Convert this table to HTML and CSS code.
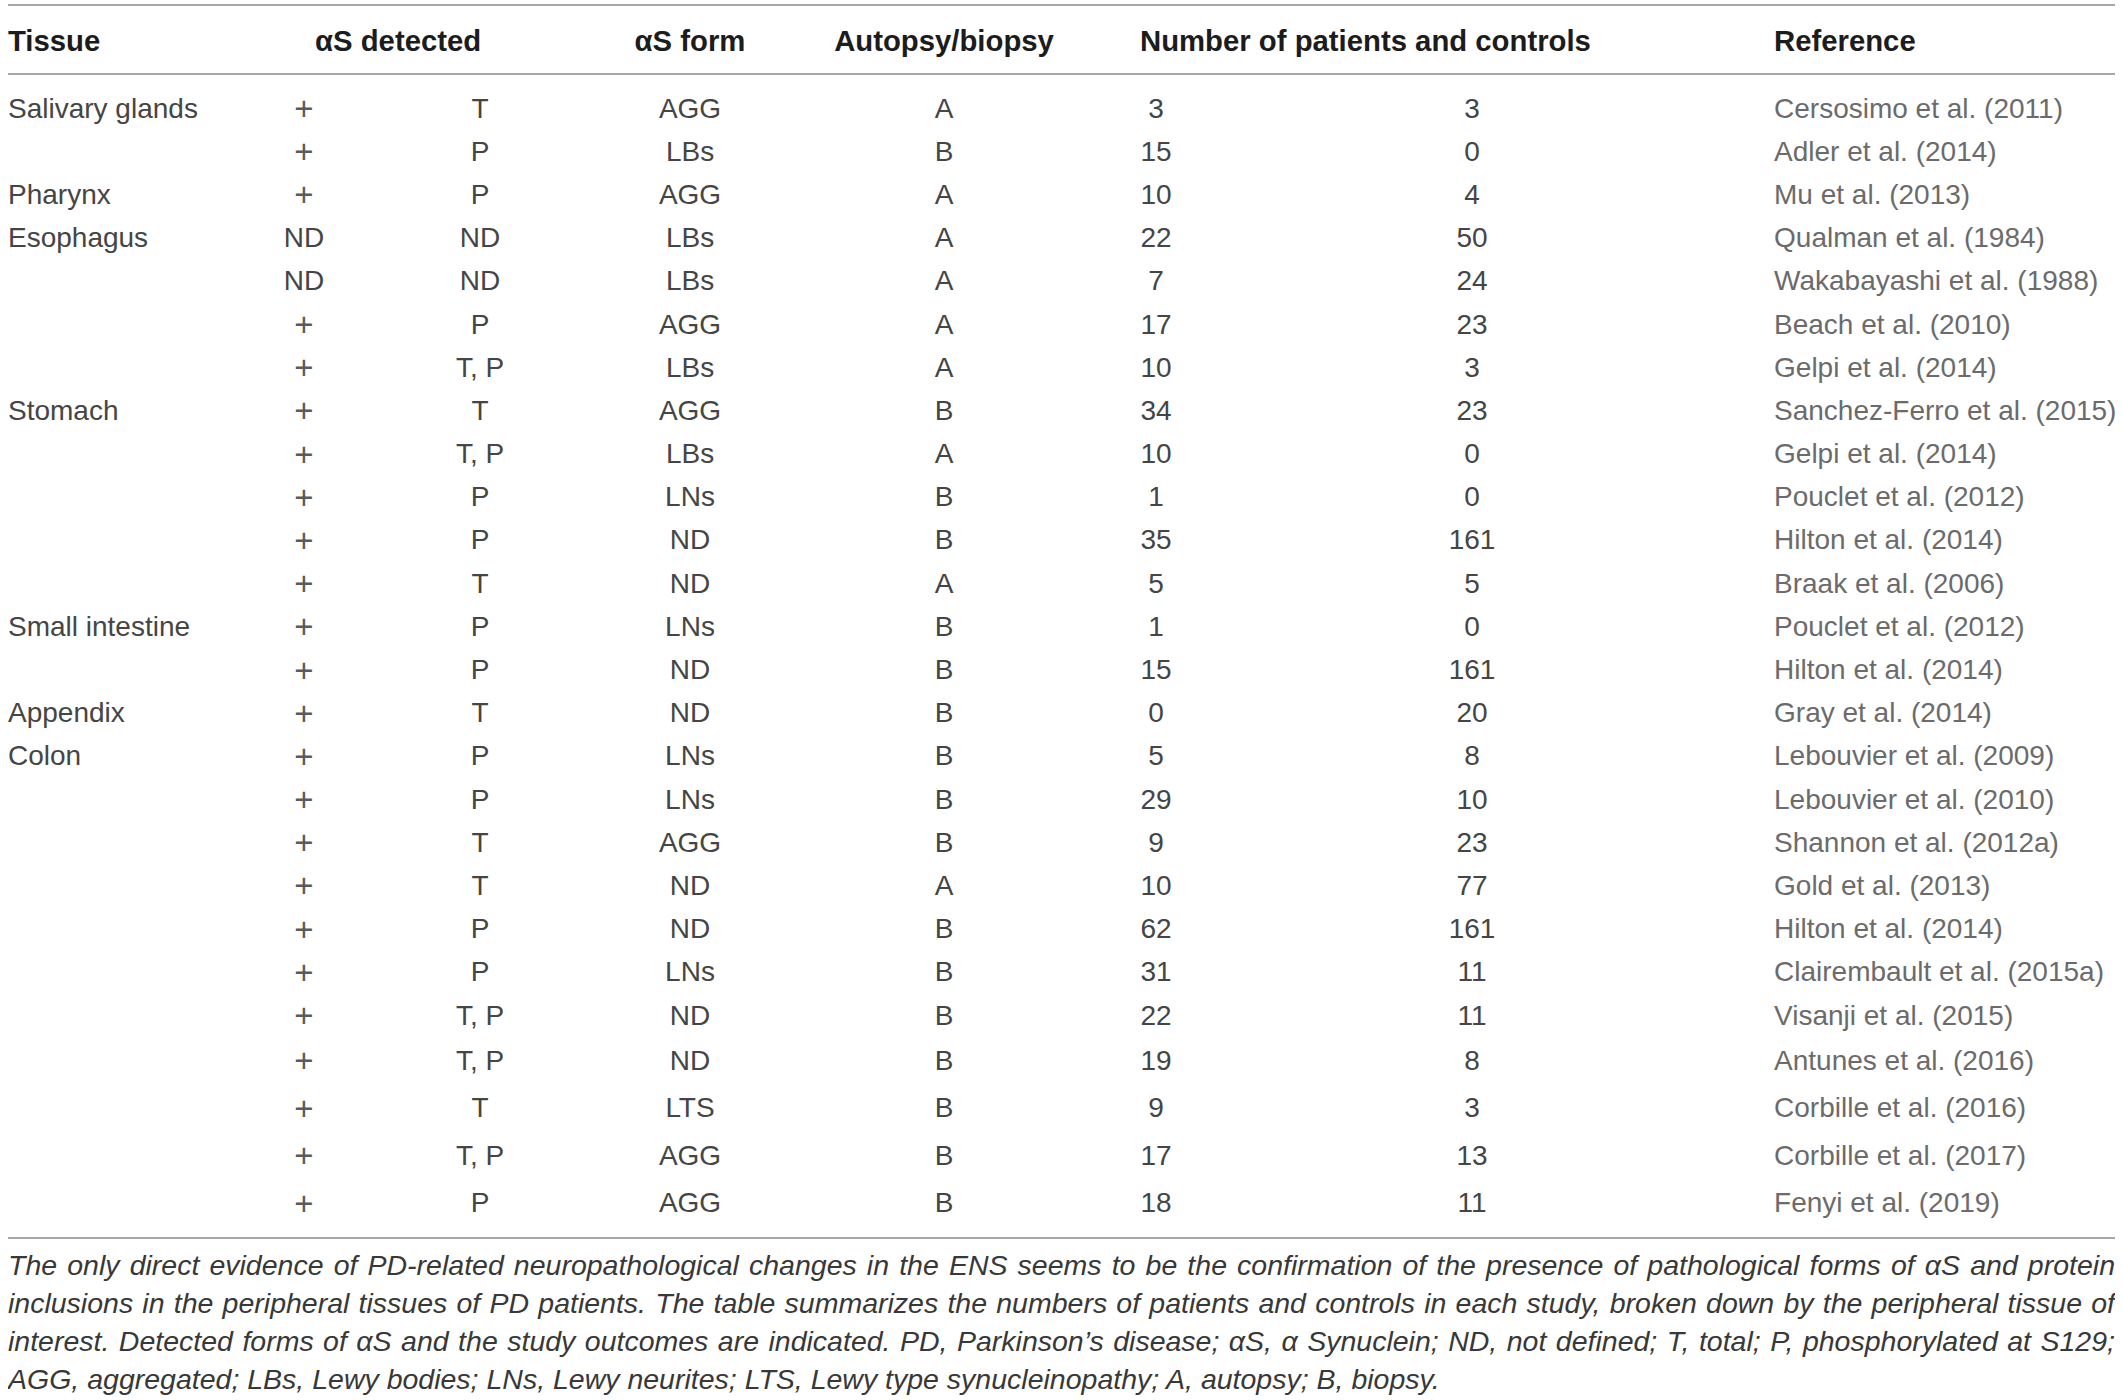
FILE: index.html
```html
<!DOCTYPE html>
<html lang="en">
<head>
<meta charset="UTF-8">
<title>Alpha-synuclein in peripheral tissues of PD patients</title>
<link rel="stylesheet" href="styles.css">
</head>
<body>

<table class="data">
    <colgroup>
        <col class="c-tissue">
        <col class="c-plus">
        <col class="c-type">
        <col class="c-form">
        <col class="c-method">
        <col class="c-pat">
        <col class="c-ctrl">
        <col class="c-ref">
    </colgroup>
    <thead>
        <tr>
            <th class="left">Tissue</th>
            <th colspan="2" class="detected">αS detected</th>
            <th>αS form</th>
            <th>Autopsy/biopsy</th>
            <th colspan="2" class="count">Number of patients and controls</th>
            <th class="ref">Reference</th>
        </tr>
    </thead>
    <tbody>
        <tr class="first"><td class="left">Salivary glands</td><td class="pm">+</td><td>T</td><td>AGG</td><td>A</td><td>3</td><td>3</td><td class="ref">Cersosimo et al. (2011)</td></tr>
        <tr><td class="left"></td><td class="pm">+</td><td>P</td><td>LBs</td><td>B</td><td>15</td><td>0</td><td class="ref">Adler et al. (2014)</td></tr>
        <tr><td class="left">Pharynx</td><td class="pm">+</td><td>P</td><td>AGG</td><td>A</td><td>10</td><td>4</td><td class="ref">Mu et al. (2013)</td></tr>
        <tr><td class="left">Esophagus</td><td>ND</td><td>ND</td><td>LBs</td><td>A</td><td>22</td><td>50</td><td class="ref">Qualman et al. (1984)</td></tr>
        <tr><td class="left"></td><td>ND</td><td>ND</td><td>LBs</td><td>A</td><td>7</td><td>24</td><td class="ref">Wakabayashi et al. (1988)</td></tr>
        <tr><td class="left"></td><td class="pm">+</td><td>P</td><td>AGG</td><td>A</td><td>17</td><td>23</td><td class="ref">Beach et al. (2010)</td></tr>
        <tr><td class="left"></td><td class="pm">+</td><td>T, P</td><td>LBs</td><td>A</td><td>10</td><td>3</td><td class="ref">Gelpi et al. (2014)</td></tr>
        <tr><td class="left">Stomach</td><td class="pm">+</td><td>T</td><td>AGG</td><td>B</td><td>34</td><td>23</td><td class="ref">Sanchez-Ferro et al. (2015)</td></tr>
        <tr><td class="left"></td><td class="pm">+</td><td>T, P</td><td>LBs</td><td>A</td><td>10</td><td>0</td><td class="ref">Gelpi et al. (2014)</td></tr>
        <tr><td class="left"></td><td class="pm">+</td><td>P</td><td>LNs</td><td>B</td><td>1</td><td>0</td><td class="ref">Pouclet et al. (2012)</td></tr>
        <tr><td class="left"></td><td class="pm">+</td><td>P</td><td>ND</td><td>B</td><td>35</td><td>161</td><td class="ref">Hilton et al. (2014)</td></tr>
        <tr><td class="left"></td><td class="pm">+</td><td>T</td><td>ND</td><td>A</td><td>5</td><td>5</td><td class="ref">Braak et al. (2006)</td></tr>
        <tr><td class="left">Small intestine</td><td class="pm">+</td><td>P</td><td>LNs</td><td>B</td><td>1</td><td>0</td><td class="ref">Pouclet et al. (2012)</td></tr>
        <tr><td class="left"></td><td class="pm">+</td><td>P</td><td>ND</td><td>B</td><td>15</td><td>161</td><td class="ref">Hilton et al. (2014)</td></tr>
        <tr><td class="left">Appendix</td><td class="pm">+</td><td>T</td><td>ND</td><td>B</td><td>0</td><td>20</td><td class="ref">Gray et al. (2014)</td></tr>
        <tr><td class="left">Colon</td><td class="pm">+</td><td>P</td><td>LNs</td><td>B</td><td>5</td><td>8</td><td class="ref">Lebouvier et al. (2009)</td></tr>
        <tr><td class="left"></td><td class="pm">+</td><td>P</td><td>LNs</td><td>B</td><td>29</td><td>10</td><td class="ref">Lebouvier et al. (2010)</td></tr>
        <tr><td class="left"></td><td class="pm">+</td><td>T</td><td>AGG</td><td>B</td><td>9</td><td>23</td><td class="ref">Shannon et al. (2012a)</td></tr>
        <tr><td class="left"></td><td class="pm">+</td><td>T</td><td>ND</td><td>A</td><td>10</td><td>77</td><td class="ref">Gold et al. (2013)</td></tr>
        <tr><td class="left"></td><td class="pm">+</td><td>P</td><td>ND</td><td>B</td><td>62</td><td>161</td><td class="ref">Hilton et al. (2014)</td></tr>
        <tr><td class="left"></td><td class="pm">+</td><td>P</td><td>LNs</td><td>B</td><td>31</td><td>11</td><td class="ref">Clairembault et al. (2015a)</td></tr>
        <tr><td class="left"></td><td class="pm">+</td><td>T, P</td><td>ND</td><td>B</td><td>22</td><td>11</td><td class="ref">Visanji et al. (2015)</td></tr>
        <tr class="tall"><td class="left"></td><td class="pm">+</td><td>T, P</td><td>ND</td><td>B</td><td>19</td><td>8</td><td class="ref">Antunes et al. (2016)</td></tr>
        <tr class="tall"><td class="left"></td><td class="pm">+</td><td>T</td><td>LTS</td><td>B</td><td>9</td><td>3</td><td class="ref">Corbille et al. (2016)</td></tr>
        <tr class="tall"><td class="left"></td><td class="pm">+</td><td>T, P</td><td>AGG</td><td>B</td><td>17</td><td>13</td><td class="ref">Corbille et al. (2017)</td></tr>
        <tr class="tall last"><td class="left"></td><td class="pm">+</td><td>P</td><td>AGG</td><td>B</td><td>18</td><td>11</td><td class="ref">Fenyi et al. (2019)</td></tr>
    </tbody>
</table>

<p class="note">The only direct evidence of PD-related neuropathological changes in the ENS seems to be the confirmation of the presence of pathological forms of αS and protein inclusions in the peripheral tissues of PD patients. The table summarizes the numbers of patients and controls in each study, broken down by the peripheral tissue of interest. Detected forms of αS and the study outcomes are indicated. PD, Parkinson’s disease; αS, α Synuclein; ND, not defined; T, total; P, phosphorylated at S129; AGG, aggregated; LBs, Lewy bodies; LNs, Lewy neurites; LTS, Lewy type synucleinopathy; A, autopsy; B, biopsy.</p>

</body>
</html>
```

FILE: styles.css
```css
body {
    margin: 4px 8px 0;
    background: #fff;
    font-family: "Liberation Sans", Arial, sans-serif;
    color: #454545;
}

.data {
    width: 100%;
    table-layout: fixed;
    border-collapse: collapse;
    border-top: 2px solid #a8a8a8;
    border-bottom: 2px solid #a8a8a8;
    font-size: 28px;
}

.c-tissue { width: 212px; }
.c-plus { width: 168px; }
.c-type { width: 184px; }
.c-form { width: 236px; }
.c-method { width: 272px; }
.c-pat { width: 152px; }
.c-ctrl { width: 480px; }
.c-ref { width: 403px; }

.data thead tr {
    border-bottom: 2px solid #a8a8a8;
}

.data th {
    height: 64px;
    padding: 3px 0 0;
    font-size: 29.3px;
    font-weight: bold;
    color: #1c1c1c;
    text-align: center;
    vertical-align: middle;
    white-space: nowrap;
}

.data td {
    height: 43.2px;
    padding: 0;
    line-height: 1;
    text-align: center;
    vertical-align: middle;
    white-space: nowrap;
}

.data td.pm {
    font-size: 33px;
    color: #5a5a5a;
}

.data tr.first td {
    padding-top: 12px;
}

.data tr.tall td {
    height: 47.5px;
}

.data tr.last td {
    padding-bottom: 10px;
}

.data .left {
    text-align: left;
}

.data th.detected {
    text-align: left;
    padding-left: 95px;
}

.data th.count {
    text-align: left;
    padding-left: 60px;
}

.data .ref {
    text-align: left;
    padding-left: 62px;
}

.data td.ref {
    color: #6b6b6b;
}

.note {
    margin: 7px 0 0;
    font-size: 28.5px;
    line-height: 38px;
    font-style: italic;
    text-align: justify;
    color: #383838;
}
```
